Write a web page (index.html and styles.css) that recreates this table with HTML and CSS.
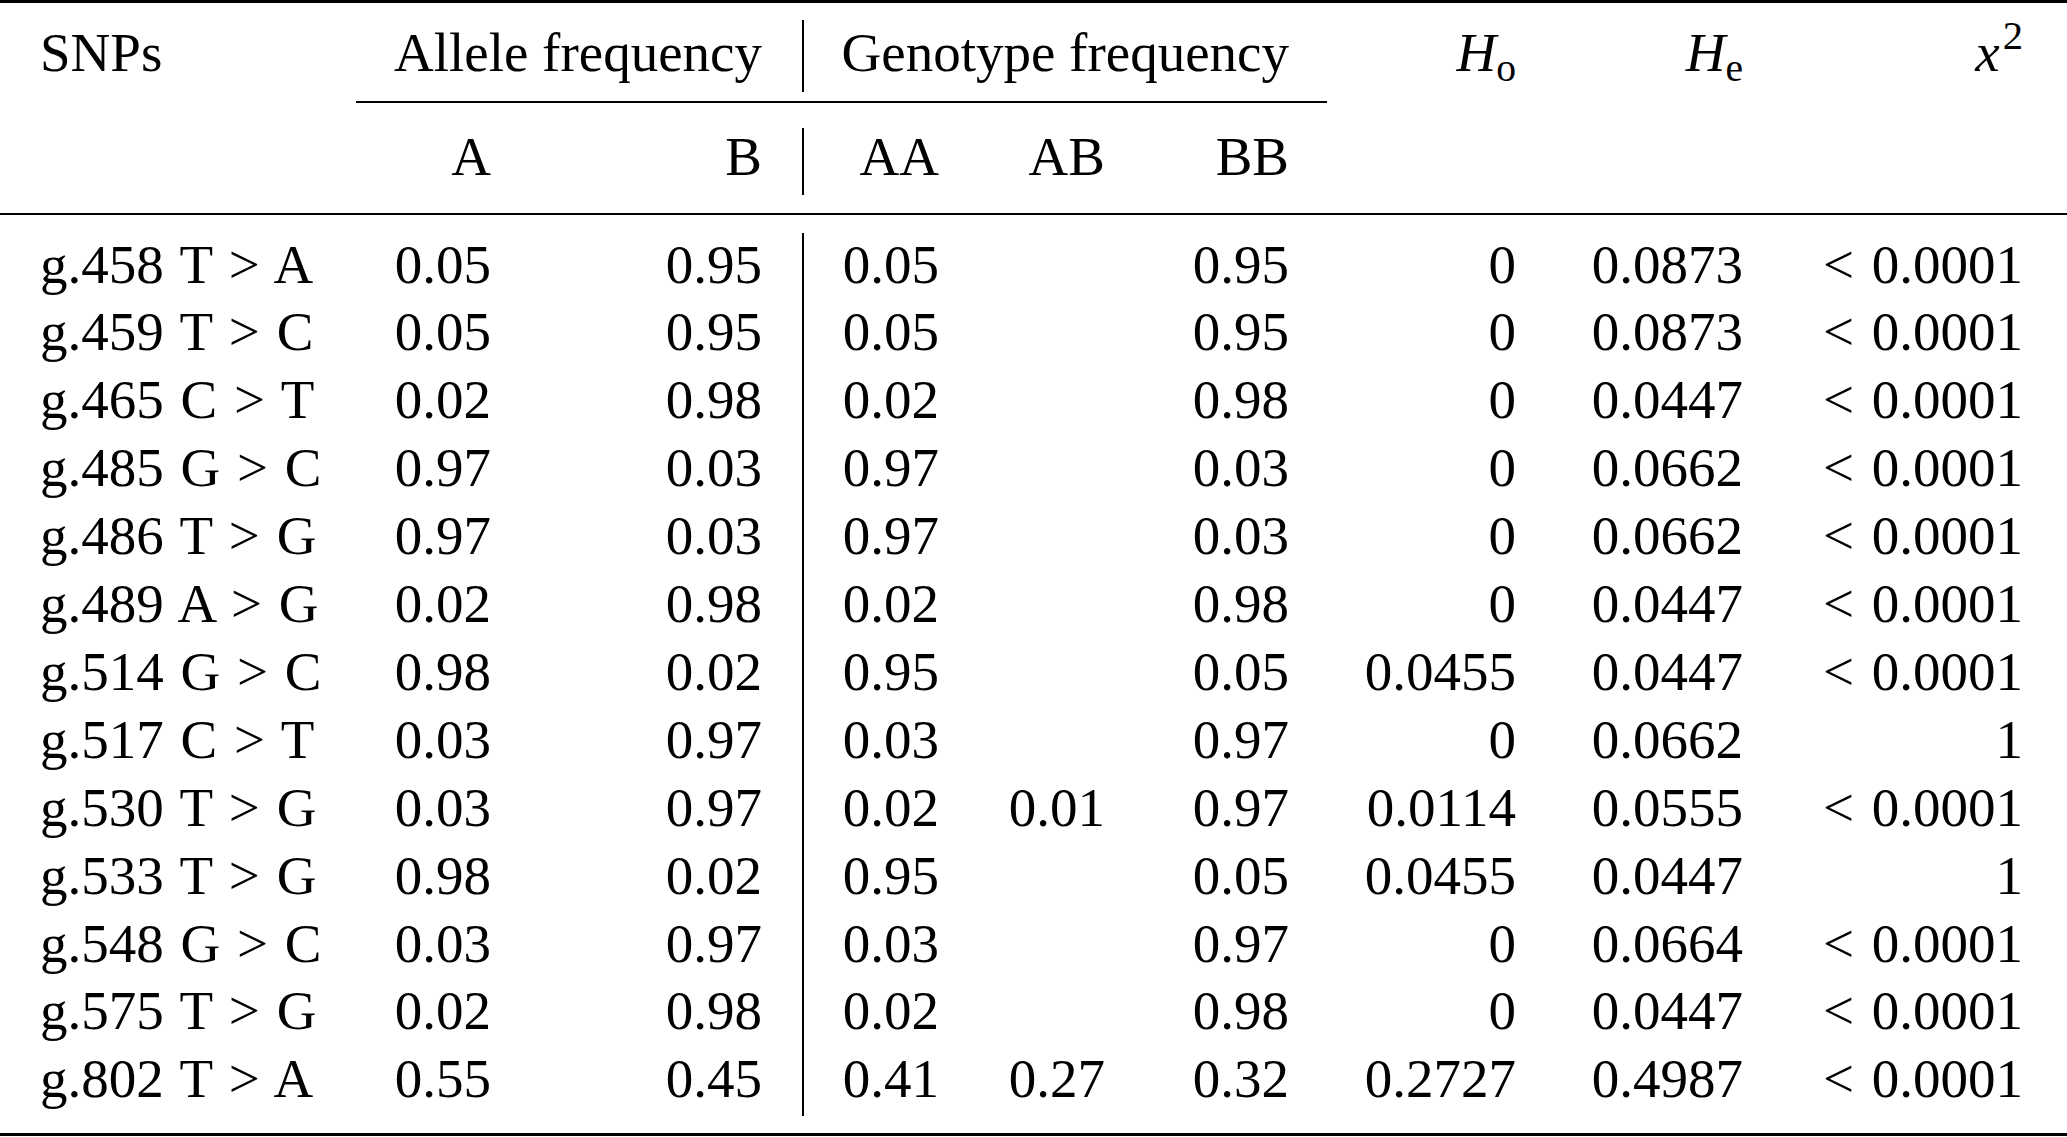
FILE: index.html
```html
<!DOCTYPE html>
<html lang="en">
<head>
<meta charset="utf-8">
<title>SNP frequencies</title>
<link rel="stylesheet" href="styles.css">
</head>
<body>
<div class="table">
  <div class="rule toprule"></div>

  <div class="cell left head1">SNPs</div>
  <div class="cell head1 span2 pad-b">Allele frequency</div>
  <div class="vline vline-h1"></div>
  <div class="cell head1 span3">Genotype frequency</div>
  <div class="cell head1"><i>H</i><span class="sub">o</span></div>
  <div class="cell head1"><i>H</i><span class="sub">e</span></div>
  <div class="cell head1 last"><i>x</i><span class="sup">2</span></div>

  <div></div>
  <div class="cmidrule"></div>
  <div></div><div></div><div></div>

  <div class="cell head2"></div>
  <div class="cell head2">A</div>
  <div class="cell head2 pad-b">B</div>
  <div class="vline vline-h2"></div>
  <div class="cell head2">AA</div>
  <div class="cell head2">AB</div>
  <div class="cell head2">BB</div>
  <div class="cell head2"></div>
  <div class="cell head2"></div>
  <div class="cell head2 last"></div>

  <div class="rule midrule"></div>

  <div class="cell left first">g.458 T &gt; A</div>
  <div class="cell first">0.05</div>
  <div class="cell first pad-b">0.95</div>
  <div class="vline vline-body"></div>
  <div class="cell first">0.05</div>
  <div class="cell first"></div>
  <div class="cell first">0.95</div>
  <div class="cell first">0</div>
  <div class="cell first">0.0873</div>
  <div class="cell first last">&lt; 0.0001</div>

  <div class="cell left">g.459 T &gt; C</div>
  <div class="cell">0.05</div>
  <div class="cell pad-b">0.95</div>
  <div class="cell">0.05</div>
  <div class="cell"></div>
  <div class="cell">0.95</div>
  <div class="cell">0</div>
  <div class="cell">0.0873</div>
  <div class="cell last">&lt; 0.0001</div>

  <div class="cell left">g.465 C &gt; T</div>
  <div class="cell">0.02</div>
  <div class="cell pad-b">0.98</div>
  <div class="cell">0.02</div>
  <div class="cell"></div>
  <div class="cell">0.98</div>
  <div class="cell">0</div>
  <div class="cell">0.0447</div>
  <div class="cell last">&lt; 0.0001</div>

  <div class="cell left">g.485 G &gt; C</div>
  <div class="cell">0.97</div>
  <div class="cell pad-b">0.03</div>
  <div class="cell">0.97</div>
  <div class="cell"></div>
  <div class="cell">0.03</div>
  <div class="cell">0</div>
  <div class="cell">0.0662</div>
  <div class="cell last">&lt; 0.0001</div>

  <div class="cell left">g.486 T &gt; G</div>
  <div class="cell">0.97</div>
  <div class="cell pad-b">0.03</div>
  <div class="cell">0.97</div>
  <div class="cell"></div>
  <div class="cell">0.03</div>
  <div class="cell">0</div>
  <div class="cell">0.0662</div>
  <div class="cell last">&lt; 0.0001</div>

  <div class="cell left">g.489 A &gt; G</div>
  <div class="cell">0.02</div>
  <div class="cell pad-b">0.98</div>
  <div class="cell">0.02</div>
  <div class="cell"></div>
  <div class="cell">0.98</div>
  <div class="cell">0</div>
  <div class="cell">0.0447</div>
  <div class="cell last">&lt; 0.0001</div>

  <div class="cell left">g.514 G &gt; C</div>
  <div class="cell">0.98</div>
  <div class="cell pad-b">0.02</div>
  <div class="cell">0.95</div>
  <div class="cell"></div>
  <div class="cell">0.05</div>
  <div class="cell">0.0455</div>
  <div class="cell">0.0447</div>
  <div class="cell last">&lt; 0.0001</div>

  <div class="cell left">g.517 C &gt; T</div>
  <div class="cell">0.03</div>
  <div class="cell pad-b">0.97</div>
  <div class="cell">0.03</div>
  <div class="cell"></div>
  <div class="cell">0.97</div>
  <div class="cell">0</div>
  <div class="cell">0.0662</div>
  <div class="cell last">1</div>

  <div class="cell left">g.530 T &gt; G</div>
  <div class="cell">0.03</div>
  <div class="cell pad-b">0.97</div>
  <div class="cell">0.02</div>
  <div class="cell">0.01</div>
  <div class="cell">0.97</div>
  <div class="cell">0.0114</div>
  <div class="cell">0.0555</div>
  <div class="cell last">&lt; 0.0001</div>

  <div class="cell left">g.533 T &gt; G</div>
  <div class="cell">0.98</div>
  <div class="cell pad-b">0.02</div>
  <div class="cell">0.95</div>
  <div class="cell"></div>
  <div class="cell">0.05</div>
  <div class="cell">0.0455</div>
  <div class="cell">0.0447</div>
  <div class="cell last">1</div>

  <div class="cell left">g.548 G &gt; C</div>
  <div class="cell">0.03</div>
  <div class="cell pad-b">0.97</div>
  <div class="cell">0.03</div>
  <div class="cell"></div>
  <div class="cell">0.97</div>
  <div class="cell">0</div>
  <div class="cell">0.0664</div>
  <div class="cell last">&lt; 0.0001</div>

  <div class="cell left">g.575 T &gt; G</div>
  <div class="cell">0.02</div>
  <div class="cell pad-b">0.98</div>
  <div class="cell">0.02</div>
  <div class="cell"></div>
  <div class="cell">0.98</div>
  <div class="cell">0</div>
  <div class="cell">0.0447</div>
  <div class="cell last">&lt; 0.0001</div>

  <div class="cell left final">g.802 T &gt; A</div>
  <div class="cell final">0.55</div>
  <div class="cell final pad-b">0.45</div>
  <div class="cell final">0.41</div>
  <div class="cell final">0.27</div>
  <div class="cell final">0.32</div>
  <div class="cell final">0.2727</div>
  <div class="cell final">0.4987</div>
  <div class="cell final last">&lt; 0.0001</div>

  <div class="rule bottomrule"></div>
</div>
</body>
</html>
```

FILE: styles.css
```css
html, body {
  margin: 0;
  padding: 0;
  background: #ffffff;
}

body {
  font-family: "Liberation Serif", "Times New Roman", serif;
  font-size: 55px;
  color: #000000;
  width: 2067px;
  height: 1137px;
  overflow: hidden;
}

.table {
  display: grid;
  grid-template-columns: 356px 173px 273px 2px 173px 166px 184px 227px 227px 286px;
  width: 2067px;
}

.cell {
  text-align: right;
  padding-right: 38px;
  line-height: 67.9px;
  white-space: nowrap;
}

.cell.left {
  text-align: left;
  padding-left: 40px;
  padding-right: 0;
  word-spacing: 3px;
}

.cell.pad-b {
  padding-right: 40px;
}

.cell.last {
  padding-right: 44px;
  word-spacing: 4px;
}

.span2 {
  grid-column: span 2;
}

.span3 {
  grid-column: span 3;
}

.head1 {
  line-height: 96px;
  padding-top: 2px;
}

.head2 {
  line-height: 108px;
  padding-bottom: 2px;
}

.first {
  padding-top: 15.5px;
}

.final {
  padding-bottom: 20px;
}

.rule {
  grid-column: 1 / -1;
  background: #000000;
}

.toprule {
  height: 3px;
}

.midrule {
  height: 2px;
}

.bottomrule {
  height: 3px;
}

.cmidrule {
  grid-column: span 6;
  height: 2px;
  background: #000000;
}

.vline {
  background: #000000;
  width: 2px;
}

.vline-h1 {
  margin-top: 17px;
  margin-bottom: 9px;
}

.vline-h2 {
  margin-top: 25px;
  margin-bottom: 18px;
}

.vline-body {
  grid-row: span 13;
  margin-top: 18px;
  margin-bottom: 17px;
}

.sub {
  font-size: 0.72em;
  vertical-align: -10px;
  line-height: 0;
}

.sup {
  font-size: 0.74em;
  vertical-align: 22px;
  line-height: 0;
  margin-left: 3px;
}
```
